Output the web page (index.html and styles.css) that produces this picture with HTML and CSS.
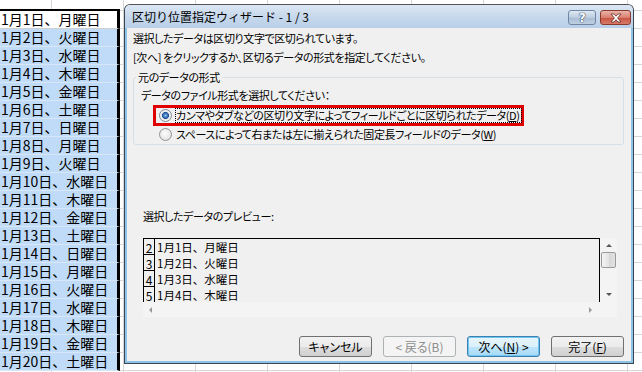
FILE: index.html
```html
<!doctype html>
<html lang="ja">
<head>
    <meta charset="UTF-8">
    <title>区切り位置指定ウィザード</title>
    <link rel="stylesheet" href="styles.css">
</head>
<body>
<div class="sheet">
    <div class="selCol">
        <div class="cell active">1月1日、月曜日</div>
        <div class="cell">1月2日、火曜日</div>
        <div class="cell">1月3日、水曜日</div>
        <div class="cell">1月4日、木曜日</div>
        <div class="cell">1月5日、金曜日</div>
        <div class="cell">1月6日、土曜日</div>
        <div class="cell">1月7日、日曜日</div>
        <div class="cell">1月8日、月曜日</div>
        <div class="cell">1月9日、火曜日</div>
        <div class="cell">1月10日、水曜日</div>
        <div class="cell">1月11日、木曜日</div>
        <div class="cell">1月12日、金曜日</div>
        <div class="cell">1月13日、土曜日</div>
        <div class="cell">1月14日、日曜日</div>
        <div class="cell">1月15日、月曜日</div>
        <div class="cell">1月16日、火曜日</div>
        <div class="cell">1月17日、水曜日</div>
        <div class="cell">1月18日、木曜日</div>
        <div class="cell">1月19日、金曜日</div>
        <div class="cell">1月20日、土曜日</div>
    </div>
</div>

<div class="dialog">
    <div class="titleBar">
        <span class="title">区切り位置指定ウィザード - 1 / 3</span>
        <span class="helpBtn">?</span>
        <span class="closeBtn">
            <svg width="14" height="10" viewBox="0 0 14 10">
                <path d="M2 1 L5 1 L7 3.2 L9 1 L12 1 L8.6 5 L12 9 L9 9 L7 6.8 L5 9 L2 9 L5.4 5 Z"
                      fill="#fff" stroke="#6b2a20" stroke-width="0.8"/>
            </svg>
        </span>
    </div>
    <div class="dlgBody">
        <p class="msg">選択したデータは区切り文字で区切られています。</p>
        <p class="msg">[次へ] をクリックするか、区切るデータの形式を指定してください。</p>

        <fieldset class="group">
            <legend>元のデータの形式</legend>
            <p class="hint">データのファイル形式を選択してください：</p>
            <div class="markBox">
                <div class="radioRow">
                    <span class="radio checked"></span>
                    <span class="label focus">カンマやタブなどの区切り文字によってフィールドごとに区切られたデータ(<u>D</u>)</span>
                </div>
            </div>
            <div class="radioRow second">
                <span class="radio"></span>
                <span class="label">スペースによって右または左に揃えられた固定長フィールドのデータ(<u>W</u>)</span>
            </div>
        </fieldset>

        <p class="previewLabel">選択したデータのプレビュー:</p>
        <div class="preview">
            <div class="previewData">
                <div class="pRow"><span class="pNum">2</span><span class="pText">1月1日、月曜日</span></div>
                <div class="pRow"><span class="pNum">3</span><span class="pText">1月2日、火曜日</span></div>
                <div class="pRow"><span class="pNum">4</span><span class="pText">1月3日、水曜日</span></div>
                <div class="pRow"><span class="pNum">5</span><span class="pText">1月4日、木曜日</span></div>
            </div>
            <div class="vScroll">
                <span class="arrow up"></span>
                <span class="thumb"></span>
                <span class="arrow down"></span>
            </div>
            <div class="hScroll">
                <span class="arrow left"></span>
                <span class="arrow right"></span>
            </div>
            <div class="corner"></div>
        </div>

        <div class="buttons">
            <span class="btn">キャンセル</span>
            <span class="btn disabled">&lt; 戻る(B)</span>
            <span class="btn default">次へ(<u>N</u>) &gt;</span>
            <span class="btn">完了(<u>F</u>)</span>
        </div>
    </div>
</div>
</body>
</html>
```

FILE: styles.css
```css
* {
    margin: 0;
    padding: 0;
}

body {
    width: 642px;
    height: 372px;
    overflow: hidden;
    position: relative;
    background: #fff;
    font-family: "Noto Sans CJK JP", sans-serif;
    font-size: 12px;
    color: #000;
}

/* excel sheet behind the dialog */
.sheet {
    height: 372px;
    background-image: linear-gradient(to right, #d6d6d6 1px, transparent 1px),
                      linear-gradient(to bottom, #d6d6d6 1px, transparent 1px);
    background-size: 72px 18px;
    background-position: 123px 10px;
}

.selCol {
    width: 120px;
    padding-top: 9px;
}

.selCol .cell {
    height: 17px;
    line-height: 17px;
    border-bottom: 1px solid #d8e7f7;
    background: #bfdbf7;
    font-size: 14px;
    padding-left: 1px;
    white-space: nowrap;
    border-right: 3px solid #000;
}

.selCol .cell.active {
    background: #fff;
    border-top: 2px solid #000;
    border-bottom-color: #d0d0d0;
}

/* dialog window */
.dialog {
    position: absolute;
    left: 124px;
    top: 4px;
    width: 510px;
    height: 360px;
    box-sizing: border-box;
    border: 1px solid #3c4650;
    border-top-color: #555;
    border-radius: 6px 6px 0 0;
    background: #f0f0f0;
    box-shadow: inset 0 0 0 2px #8cc3e6;
    display: flex;
    flex-direction: column;
    font-size: 11px;
    letter-spacing: -0.4px;
    font-feature-settings: "palt";
}

.titleBar {
    height: 23px;
    display: flex;
    align-items: flex-start;
    padding: 0 2px 0 7px;
    border-radius: 5px 5px 0 0;
    background: linear-gradient(#dce7f3, #c3d6eb 60%, #b9cfe8);
}

.titleBar .title {
    flex: 1;
    line-height: 23px;
    font-size: 12px;
    letter-spacing: 0;
    font-feature-settings: normal;
}

.helpBtn, .closeBtn {
    margin-top: 5px;
    height: 15px;
    box-sizing: border-box;
    border-radius: 3px;
    display: flex;
    align-items: center;
    justify-content: center;
}

.helpBtn {
    width: 28px;
    margin-right: 4px;
    border: 1px solid #6f87a3;
    background: linear-gradient(#e1e9f3, #bccde0 50%, #a6bbd3 51%, #c0d0e2);
    color: #fff;
    font: bold 12px "DejaVu Sans", sans-serif;
    text-shadow: 0 0 1px #2f4763, 0 0 1px #2f4763, 0 0 1px #2f4763;
}

.closeBtn {
    width: 31px;
    border: 1px solid #8b3a2e;
    background: linear-gradient(#eab4a9, #d98070 50%, #c9503f 51%, #d77c6b);
}

.dlgBody {
    flex: 1;
    padding: 1px 9px 0 8px;
}

.msg {
    line-height: 19px;
    white-space: nowrap;
}

.group {
    margin-top: 3px;
    border: 1px solid #d5dfe5;
    border-radius: 3px;
    padding: 0 0 2px 0;
    min-width: 0;
}

.group legend {
    margin-left: 2px;
    padding: 0 2px;
    line-height: 15px;
}

.group .hint {
    margin: 1px 0 0 7px;
    line-height: 18px;
}

.markBox {
    margin: 1px 0 0 19px;
    width: 371px;
    height: 21px;
    box-sizing: border-box;
    border: 3px solid #e00000;
    padding-left: 3px;
}

.radioRow {
    display: flex;
    align-items: center;
    height: 15px;
    white-space: nowrap;
}

.radioRow.second {
    margin: 0 0 0 25px;
    height: 16px;
}

.radio {
    flex-shrink: 0;
    width: 13px;
    height: 13px;
    box-sizing: border-box;
    border-radius: 50%;
    border: 1px solid #929292;
    background: radial-gradient(circle at 45% 40%, #fdfdfd, #dadada);
    margin-right: 3px;
}

.radio.checked {
    border-color: #7b8a9a;
    background: radial-gradient(circle at 50% 50%, #8cc4f3 0, #2d66ac 2.5px, #1f4f8e 3.2px, #e9e9e9 3.8px, #fafafa 6px);
}

.label {
    line-height: 13px;
    border: 1px dotted transparent;
    padding-right: 1px;
}

.label.focus {
    border-color: #000;
}

.previewLabel {
    margin: 63px 0 0 10px;
    line-height: 16px;
}

/* preview with its scrollbars */
.preview {
    margin: 14px 0 0 10px;
    width: 474px;
    display: grid;
    grid-template-columns: 1fr 17px;
    grid-template-rows: 64px 15px;
    letter-spacing: 0;
    font-feature-settings: normal;
}

.previewData {
    border: 1px solid #000;
    border-bottom: none;
    overflow: hidden;
}

.pRow {
    display: flex;
    height: 16px;
}

.pNum {
    width: 11px;
    box-sizing: border-box;
    border-right: 1px solid #000;
    border-bottom: 1px solid #000;
    font-size: 12px;
    line-height: 17px;
    text-align: center;
}

.pText {
    padding-left: 2px;
    font-size: 11.5px;
    line-height: 16px;
    white-space: nowrap;
}

.vScroll, .hScroll, .corner {
    background: #f4f4f4;
}

.vScroll {
    display: flex;
    flex-direction: column;
    align-items: center;
    padding: 6px 0 6px;
}

.vScroll .thumb {
    margin: 5px 0 auto;
    width: 15px;
    height: 16px;
    box-sizing: border-box;
    border: 1px solid #9a9a9a;
    border-radius: 2px;
    background: linear-gradient(to right, #f4f4f4, #e4e4e4 50%, #d6d6d6 51%, #e2e2e2);
}

.hScroll {
    display: flex;
    align-items: center;
    justify-content: space-between;
    padding: 0 8px 0 6px;
}

.arrow {
    width: 0;
    height: 0;
    border: 3px solid transparent;
}

.arrow.up {
    border-bottom: 3px solid #555;
    border-top-width: 0;
}

.arrow.down {
    border-top: 3px solid #555;
    border-bottom-width: 0;
}

.arrow.left {
    border-right: 3px solid #999;
    border-left-width: 0;
}

.arrow.right {
    border-left: 3px solid #999;
    border-right-width: 0;
}

.buttons {
    margin-top: 19px;
    display: flex;
    justify-content: flex-end;
    gap: 11px;
}

.btn {
    width: 73px;
    height: 21px;
    box-sizing: border-box;
    border: 1px solid #707070;
    border-radius: 3px;
    background: linear-gradient(#f2f2f2, #ebebeb 50%, #dddddd 51%, #cfcfcf);
    text-align: center;
    line-height: 19px;
    white-space: nowrap;
    font-size: 12px;
    letter-spacing: 0;
}

.btn.disabled {
    color: #8d8d8d;
    border-color: #adb2b5;
    background: #f4f4f4;
}

.btn.default {
    border-color: #3c7fb1;
    box-shadow: inset 0 0 0 1px #6fc6ee;
    background: linear-gradient(#eaf6fd, #d9f0fc 50%, #bee6fd 51%, #a7d9f5);
}
```
